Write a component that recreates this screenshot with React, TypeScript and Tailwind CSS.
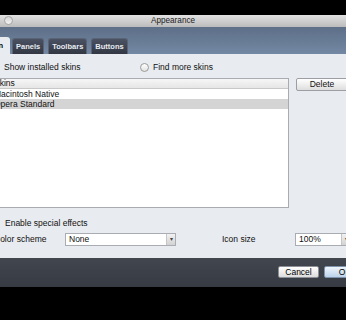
import React from "react";

const FONT = "font-['Liberation_Sans',Arial,sans-serif]";

function Radio({ checked = false }: { checked?: boolean }) {
  return (
    <span className="flex h-[9px] w-[9px] shrink-0 items-center justify-center rounded-full border border-[#9a9a9a] bg-gradient-to-b from-white to-[#e2e2e2]">
      {checked && <span className="h-[4px] w-[4px] rounded-full bg-[#333]" />}
    </span>
  );
}

function Tab({ label }: { label: string }) {
  return (
    <div className="flex h-[16px] items-center rounded-t-[3px] border border-b-0 border-[#5a6375] bg-gradient-to-b from-[#4b5262] to-[#323743] px-[3px] text-[7.5px] font-bold text-[#e8ecf2]">
      {label}
    </div>
  );
}

function Select({ value, className }: { value: string; className: string }) {
  return (
    <div className={`flex h-[13px] shrink-0 items-stretch border border-[#a9acb2] bg-white ${className}`}>
      <span className="flex-1 pl-[3px] text-[8.5px] leading-[11px]">{value}</span>
      <span className="flex w-[9px] items-center justify-center border-l border-[#c4c6ca] bg-gradient-to-b from-[#f2f2f2] to-[#d2d2d2] text-[6px] text-[#444]">
        ▾
      </span>
    </div>
  );
}

export default function App() {
  const rows = [
    { name: "Macintosh Native", selected: false },
    { name: "Opera Standard", selected: true },
  ];

  return (
    <div className={`h-[320px] w-[346px] overflow-hidden bg-black ${FONT}`}>
      <div className="ml-[-24px] mt-[15px] flex w-[394px] flex-col">
        {/* Title bar */}
        <div className="relative flex h-[12px] items-center justify-center bg-gradient-to-b from-[#e2e2e2] to-[#bcbcbc] text-[8.2px] text-[#222]">
          <span className="absolute left-[28px] top-[1px] h-[9px] w-[9px] rounded-full border border-[#a5a5a5] bg-gradient-to-b from-[#d6d6d6] to-[#f2f2f2]" />
          Appearance
        </div>

        {/* Tabs */}
        <div className="flex h-[27px] items-end bg-gradient-to-b from-[#5e6f88] to-[#7388a3] pl-[4px]">
          <div className="mr-[2px] flex h-[17px] w-[30px] items-center justify-end rounded-t-[3px] bg-[#e8ebef] pr-[7px] text-[7.5px] font-bold text-black">
            Skin
          </div>
          <div className="flex items-end gap-[4px]">
            <Tab label="Panels" />
            <Tab label="Toolbars" />
            <Tab label="Buttons" />
          </div>
        </div>

        {/* Content */}
        <div className="flex h-[204px] flex-col bg-[#e8ebef] pl-[12px] text-[8.5px] text-[#111]">
          <div className="mt-[9px] flex h-[9px] items-center pl-[2px]">
            <Radio checked />
            <span className="ml-[5px] w-[136px]">Show installed skins</span>
            <Radio />
            <span className="ml-[4px]">Find more skins</span>
          </div>

          <div className="mt-[6px] flex">
            <div className="h-[130px] w-[301px] border border-[#a8abb0] bg-white">
              <div className="flex h-[10px] items-center border-b border-[#c8c8c8] bg-gradient-to-b from-[#f6f6f6] to-[#e6e6e6] pl-[5px]">
                Skins
              </div>
              {rows.map((r) => (
                <div
                  key={r.name}
                  className={`flex h-[10px] items-center pl-[5px] ${r.selected ? "bg-[#d4d4d4]" : "bg-white"}`}
                >
                  {r.name}
                </div>
              ))}
            </div>
            <button className="ml-[7px] h-[13px] w-[52px] rounded-[2px] border border-[#9c9ea3] bg-gradient-to-b from-white to-[#dedede] text-[8.5px] leading-[11px]">
              Delete
            </button>
          </div>

          <div className="mt-[11px] flex h-[9px] items-center pl-[2px]">
            <span className="h-[9px] w-[9px] rounded-[1px] border border-[#9a9a9a] bg-gradient-to-b from-white to-[#e2e2e2]" />
            <span className="ml-[6px]">Enable special effects</span>
          </div>

          <div className="mt-[5px] flex h-[13px] items-center pl-[6px]">
            <span className="w-[71px] shrink-0">Color scheme</span>
            <Select value="None" className="w-[111px]" />
            <span className="ml-[46px] w-[73px] shrink-0">Icon size</span>
            <Select value="100%" className="w-[56px]" />
          </div>
        </div>

        {/* Bottom bar */}
        <div className="flex h-[29px] items-start justify-end gap-[5px] bg-gradient-to-b from-[#42464f] to-[#363a43] pr-[4px] pt-[8px]">
          <button className="h-[12px] w-[41px] rounded-[2px] border border-[#8c8f95] bg-gradient-to-b from-white to-[#dcdcdc] text-[8.5px] leading-[10px] text-black">
            Cancel
          </button>
          <button className="h-[12px] w-[42px] rounded-[2px] border border-[#7f93ad] bg-gradient-to-b from-[#eef5fc] to-[#bcd3ea] text-[8.5px] leading-[10px] text-black">
            OK
          </button>
        </div>
      </div>
    </div>
  );
}
